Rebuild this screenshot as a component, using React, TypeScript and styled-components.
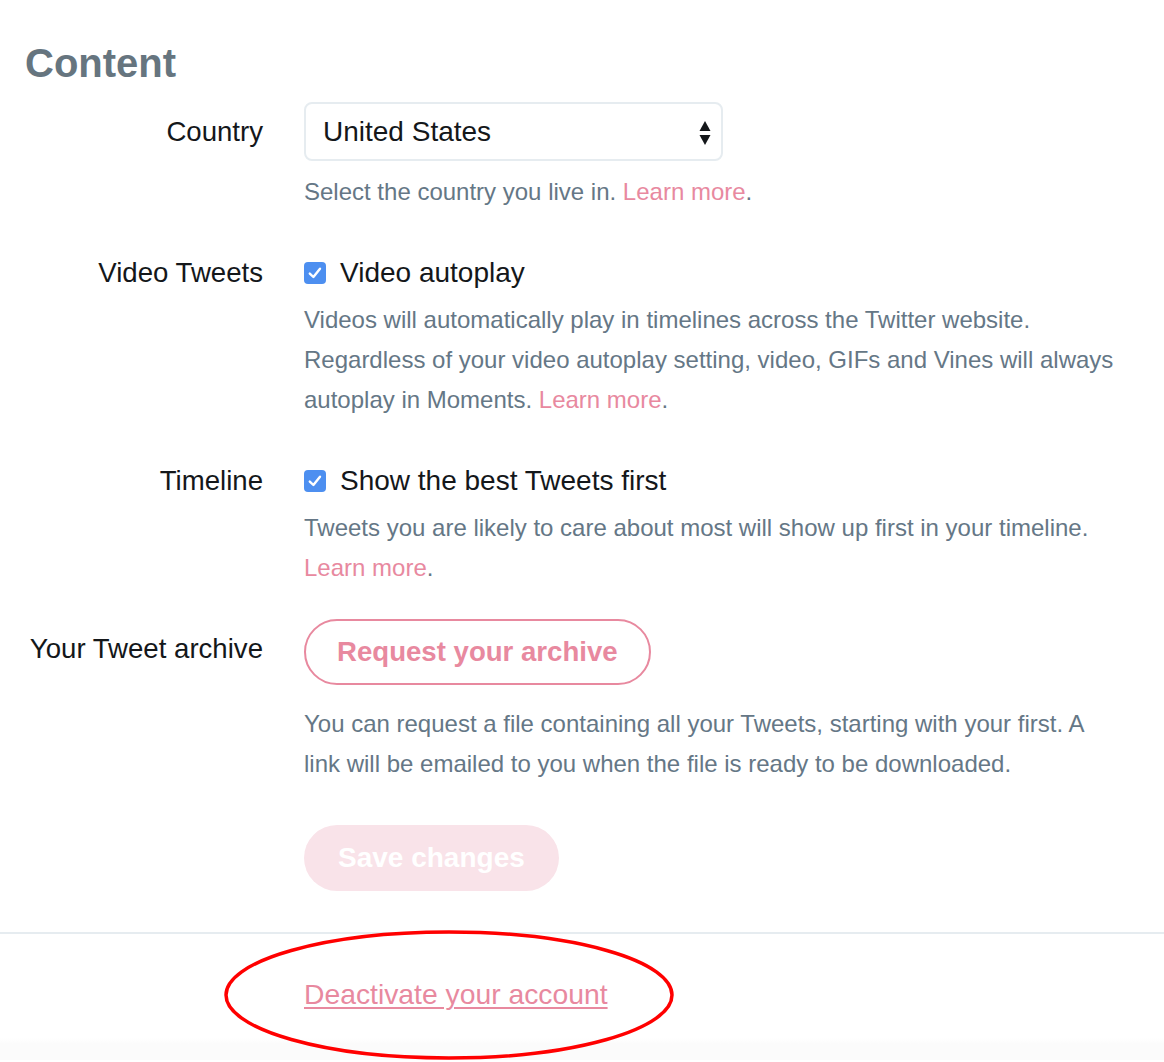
import React from "react";
import styled, { createGlobalStyle } from "styled-components";

const GlobalStyle = createGlobalStyle`
  body {
    margin: 0;
    background: #ffffff;
    font-family: "Liberation Sans", Arial, sans-serif;
  }
`;

const PINK = "#e8899f";

const Page = styled.main`
  width: 1164px;
  min-height: 1062px;
  padding-top: 39px;
  box-sizing: border-box;
  overflow: hidden;
`;

const Heading = styled.h2`
  margin: 0;
  padding-left: 25px;
  font-size: 40px;
  line-height: 48px;
  font-weight: 700;
  color: #66757f;
`;

const Field = styled.section<{ $top: number }>`
  display: grid;
  grid-template-columns: 263px 1fr;
  column-gap: 41px;
  margin-top: ${(p) => p.$top}px;
  padding-right: 10px;
`;

const Label = styled.div<{ $line: number }>`
  text-align: right;
  font-size: 27.6px;
  line-height: ${(p) => p.$line}px;
  color: #14171a;
  white-space: nowrap;
`;

const Control = styled.div`
  display: flex;
  flex-direction: column;
  align-items: flex-start;
`;

const SelectBox = styled.div`
  display: flex;
  align-items: center;
  width: 419px;
  height: 59px;
  box-sizing: border-box;
  border: 2px solid #e6ecf0;
  border-radius: 8px;
  padding: 0 9px 0 17px;
  background: #fff;
`;

const NativeSelect = styled.select`
  flex: 1;
  appearance: none;
  border: none;
  outline: none;
  background: transparent;
  padding: 0;
  font-family: inherit;
  font-size: 28px;
  color: #14171a;
`;

const Help = styled.p<{ $gap: number }>`
  margin: ${(p) => p.$gap}px 0 0;
  font-size: 24px;
  line-height: 40px;
  color: #657786;
  white-space: nowrap;
`;

const LearnMore = styled.a`
  color: ${PINK};
  text-decoration: none;
`;

const CheckLine = styled.label`
  display: flex;
  align-items: center;
  gap: 14px;
  height: 40px;
  font-size: 28px;
  color: #14171a;
`;

const CheckBox = styled.span`
  display: inline-flex;
  align-items: center;
  justify-content: center;
  width: 22px;
  height: 22px;
  border-radius: 4px;
  background: #4d8ff0;
`;

const OutlineButton = styled.button`
  height: 66px;
  padding: 0 31px;
  border: 2px solid ${PINK};
  border-radius: 33px;
  background: #fff;
  color: ${PINK};
  font-family: inherit;
  font-size: 27.6px;
  font-weight: 700;
`;

const SaveButton = styled.button`
  height: 66px;
  padding: 0 34px;
  border: none;
  border-radius: 33px;
  background: #f9e3e9;
  color: #fff;
  font-family: inherit;
  font-size: 28px;
  font-weight: 700;
`;

const Actions = styled.div`
  margin: 41px 0 0 304px;
`;

const Divider = styled.hr`
  margin: 41px 0 0;
  border: none;
  border-top: 2px solid #e6ecf0;
`;

const Footer = styled.footer`
  position: relative;
  padding: 40px 0 0 304px;
  height: 126px;
  box-sizing: border-box;
  background: linear-gradient(#ffffff 0, #ffffff 104px, #fbfbfb 110px, #fbfbfb 126px);
`;

const DeactivateLink = styled.a`
  font-size: 28.3px;
  line-height: 40px;
  color: ${PINK};
  text-decoration: underline;
  text-decoration-thickness: 2px;
  text-underline-offset: 3px;
`;

const Annotation = styled.svg`
  position: absolute;
  left: 222px;
  top: -6px;
  pointer-events: none;
`;

const Arrows = () => (
  <svg width="14" height="28" viewBox="0 0 14 28">
    <path d="M7 3 L12.5 13 L1.5 13 Z" fill="#14171a" />
    <path d="M1.5 17 L12.5 17 L7 27 Z" fill="#14171a" />
  </svg>
);

const Tick = () => (
  <svg width="16" height="16" viewBox="0 0 16 16">
    <path d="M2.8 8.6 L6.4 12 L13 3.8" fill="none" stroke="#fff" strokeWidth="2.4" strokeLinecap="round" strokeLinejoin="round" />
  </svg>
);

const App = () => {
  return (
    <Page>
      <GlobalStyle />
      <Heading>Content</Heading>

      <Field $top={15}>
        <Label $line={59}>Country</Label>
        <Control>
          <SelectBox>
            <NativeSelect defaultValue="us">
              <option value="us">United States</option>
            </NativeSelect>
            <Arrows />
          </SelectBox>
          <Help $gap={11}>
            Select the country you live in. <LearnMore href="#">Learn more</LearnMore>.
          </Help>
        </Control>
      </Field>

      <Field $top={41}>
        <Label $line={40}>Video Tweets</Label>
        <Control>
          <CheckLine>
            <CheckBox><Tick /></CheckBox>
            Video autoplay
          </CheckLine>
          <Help $gap={7}>
            Videos will automatically play in timelines across the Twitter website.
            <br />
            Regardless of your video autoplay setting, video, GIFs and Vines will always
            <br />
            autoplay in Moments. <LearnMore href="#">Learn more</LearnMore>.
          </Help>
        </Control>
      </Field>

      <Field $top={41}>
        <Label $line={40}>Timeline</Label>
        <Control>
          <CheckLine>
            <CheckBox><Tick /></CheckBox>
            Show the best Tweets first
          </CheckLine>
          <Help $gap={7}>
            Tweets you are likely to care about most will show up first in your timeline.
            <br />
            <LearnMore href="#">Learn more</LearnMore>.
          </Help>
        </Control>
      </Field>

      <Field $top={31}>
        <Label $line={60}>Your Tweet archive</Label>
        <Control>
          <OutlineButton>Request your archive</OutlineButton>
          <Help $gap={19}>
            You can request a file containing all your Tweets, starting with your first. A
            <br />
            link will be emailed to you when the file is ready to be downloaded.
          </Help>
        </Control>
      </Field>

      <Actions>
        <SaveButton disabled>Save changes</SaveButton>
      </Actions>

      <Divider />

      <Footer>
        <DeactivateLink href="#">Deactivate your account</DeactivateLink>
        <Annotation width="454" height="134" viewBox="0 0 454 134">
          <ellipse cx="227" cy="67" rx="223" ry="63" fill="none" stroke="#ff0000" strokeWidth="3.5" />
        </Annotation>
      </Footer>
    </Page>
  );
};

export default App;
